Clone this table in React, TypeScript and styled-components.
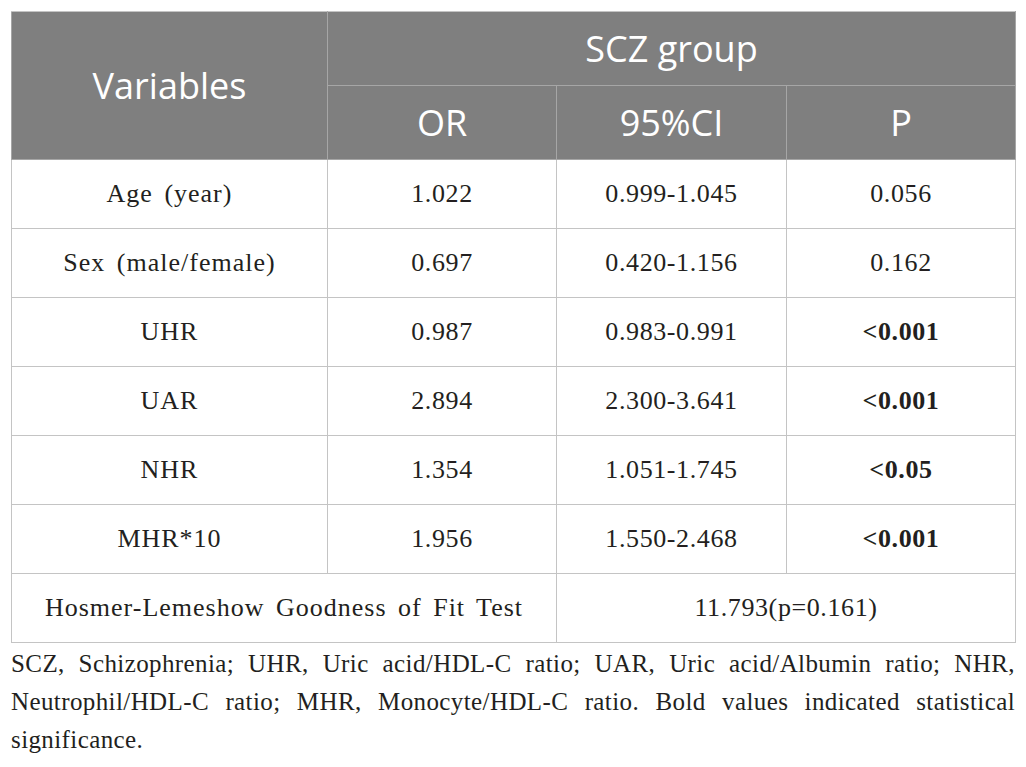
import React from "react";
import styled, { createGlobalStyle } from "styled-components";

const GlobalStyle = createGlobalStyle`
  html, body {
    margin: 0;
    padding: 0;
    background: #ffffff;
  }
`;

const Page = styled.div`
  padding: 11px 11px 0 11px;
  width: 1004px;
`;

const Table = styled.table`
  width: 1004px;
  border-collapse: collapse;
  table-layout: fixed;
  border: 1px solid #c4c4c4;
`;

const HeadCell = styled.th<{ $tall?: boolean }>`
  background: #7f7f7f;
  color: #ffffff;
  font-family: "Open Sans", "DejaVu Sans", sans-serif;
  font-weight: 400;
  font-size: 36px;
  text-align: center;
  vertical-align: middle;
  height: ${(p) => (p.$tall ? 147 : 73)}px;
  padding: 0;
  border: 1px solid #a6a6a6;
  border-top-color: #c4c4c4;
`;

// $label: word cells (variable names, footer) run a little wider than the figures
const Cell = styled.td<{ $bold?: boolean; $label?: boolean }>`
  font-family: "Liberation Serif", "Times New Roman", serif;
  font-size: 26px;
  letter-spacing: ${(p) => (p.$label ? 1 : 0.6)}px;
  word-spacing: ${(p) => (p.$label ? 4 : 0)}px;
  font-weight: ${(p) => (p.$bold ? 700 : 400)};
  color: #231f20;
  text-align: center;
  vertical-align: middle;
  height: 68px;
  padding: 0;
  border: 1px solid #c4c4c4;
`;

const Caption = styled.div`
  margin-top: 2px;
  font-family: "Liberation Serif", "Times New Roman", serif;
  font-size: 25px;
  letter-spacing: 0.4px;
  color: #231f20;
`;

const Line = styled.div<{ $last?: boolean }>`
  height: 38px;
  line-height: 38px;
  text-align: justify;
  text-align-last: ${(p) => (p.$last ? "left" : "justify")};
  white-space: nowrap;
`;

type Row = { name: string; or: string; ci: string; p: string; bold?: boolean };

const rows: Row[] = [
  { name: "Age (year)", or: "1.022", ci: "0.999-1.045", p: "0.056" },
  { name: "Sex (male/female)", or: "0.697", ci: "0.420-1.156", p: "0.162" },
  { name: "UHR", or: "0.987", ci: "0.983-0.991", p: "<0.001", bold: true },
  { name: "UAR", or: "2.894", ci: "2.300-3.641", p: "<0.001", bold: true },
  { name: "NHR", or: "1.354", ci: "1.051-1.745", p: "<0.05", bold: true },
  { name: "MHR*10", or: "1.956", ci: "1.550-2.468", p: "<0.001", bold: true },
];

const captionLines = [
  "SCZ, Schizophrenia; UHR, Uric acid/HDL-C ratio; UAR, Uric acid/Albumin ratio; NHR,",
  "Neutrophil/HDL-C ratio; MHR, Monocyte/HDL-C ratio. Bold values indicated statistical",
  "significance.",
];

export default function App() {
  return (
    <>
      <GlobalStyle />
      <Page>
        <Table>
          <colgroup>
            <col style={{ width: 316 }} />
            <col style={{ width: 229 }} />
            <col style={{ width: 230 }} />
            <col style={{ width: 229 }} />
          </colgroup>
          <thead>
            <tr>
              <HeadCell rowSpan={2} $tall>Variables</HeadCell>
              <HeadCell colSpan={3}>SCZ group</HeadCell>
            </tr>
            <tr>
              <HeadCell>OR</HeadCell>
              <HeadCell>95%CI</HeadCell>
              <HeadCell>P</HeadCell>
            </tr>
          </thead>
          <tbody>
            {rows.map((r) => (
              <tr key={r.name}>
                <Cell $label>{r.name}</Cell>
                <Cell>{r.or}</Cell>
                <Cell>{r.ci}</Cell>
                <Cell $bold={r.bold}>{r.p}</Cell>
              </tr>
            ))}
            <tr>
              <Cell colSpan={2} $label>Hosmer-Lemeshow Goodness of Fit Test</Cell>
              <Cell colSpan={2}>11.793(p=0.161)</Cell>
            </tr>
          </tbody>
        </Table>
        <Caption>
          {captionLines.map((t, i) => (
            <Line key={i} $last={i === captionLines.length - 1}>
              {t}
            </Line>
          ))}
        </Caption>
      </Page>
    </>
  );
}
